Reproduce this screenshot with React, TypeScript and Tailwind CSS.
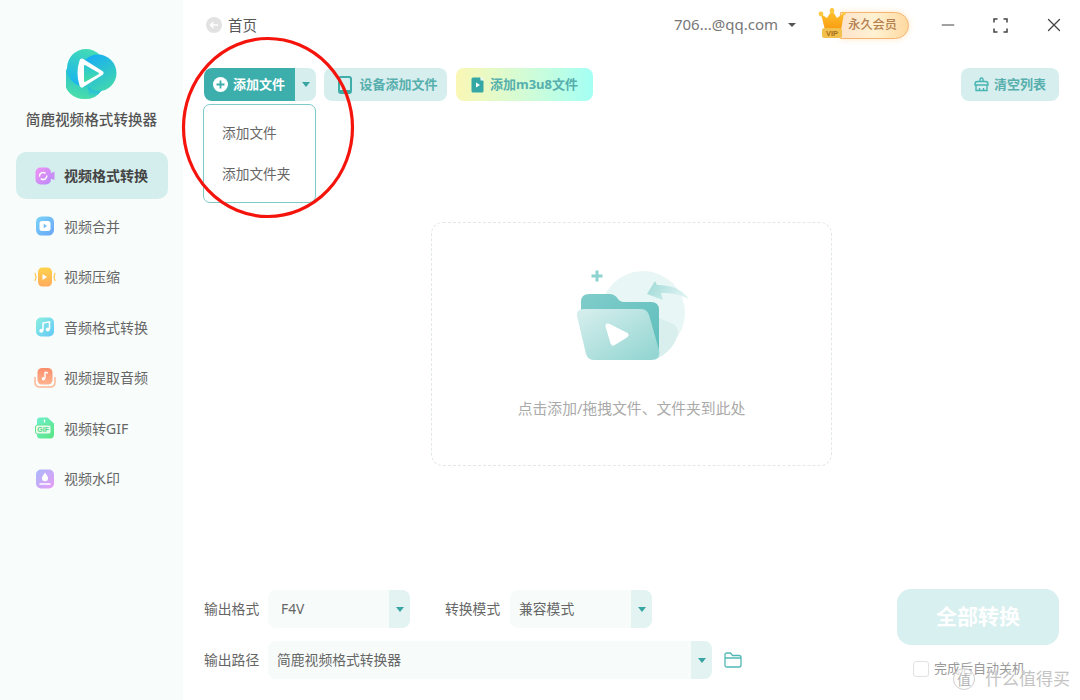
import { Minus, X } from "lucide-react";

function Logo() {
  return (
    <svg width="52" height="51" viewBox="0 0 52 51">
      <defs>
        <linearGradient id="lg1" x1="0.6" y1="0" x2="0.2" y2="1">
          <stop offset="0" stopColor="#45dcb4" />
          <stop offset="1" stopColor="#18b2f2" />
        </linearGradient>
        <linearGradient id="lg2" x1="0.2" y1="0" x2="0.8" y2="1">
          <stop offset="0" stopColor="#14aaf8" />
          <stop offset="1" stopColor="#43d9ac" />
        </linearGradient>
        <linearGradient id="lg3" x1="0.7" y1="0" x2="0.4" y2="1">
          <stop offset="0" stopColor="#16b0f2" />
          <stop offset="1" stopColor="#4bdfa6" />
        </linearGradient>
        <linearGradient id="lg4" x1="0" y1="0" x2="0" y2="1">
          <stop offset="0" stopColor="#2cc6d2" />
          <stop offset="1" stopColor="#44dca8" />
        </linearGradient>
      </defs>
      <circle cx="18" cy="30" r="20" fill="url(#lg3)" />
      <circle cx="20" cy="19" r="19" fill="url(#lg1)" />
      <circle cx="32" cy="24" r="18.5" fill="url(#lg2)" />
      <path d="M22 38 Q30 44 36 41 Q30 50 20 50 Q24 46 22 38Z" fill="url(#lg3)" />
      <path d="M16 12 L35 24 L16 36 Q12 24 16 12Z" fill="#fff" stroke="#fff" strokeWidth="5" strokeLinejoin="round" />
      <path d="M19 17 L32 24.5 L19 32Z" fill="url(#lg4)" stroke="url(#lg4)" strokeWidth="2" strokeLinejoin="round" />
    </svg>
  );
}

function NavIcon({ kind }: { kind: string }) {
  if (kind === "convert")
    return (
      <svg width="20" height="18" viewBox="0 0 20 18">
        <defs>
          <linearGradient id="ni1" x1="0" y1="0" x2="1" y2="1">
            <stop offset="0" stopColor="#f291f4" />
            <stop offset="1" stopColor="#b98af8" />
          </linearGradient>
        </defs>
        <rect x="0.5" y="0.5" width="15.5" height="17" rx="5" fill="url(#ni1)" />
        <path d="M15.5 6.5 L19.5 4.5 V13 L15.5 11.5Z" fill="#c78ef5" />
        <path d="M4.5 9 a3.6 3.6 0 0 1 5.5 -3 M11.8 9 a3.6 3.6 0 0 1 -5.5 3" stroke="#fff" strokeWidth="1.5" fill="none" strokeLinecap="round" />
      </svg>
    );
  if (kind === "merge")
    return (
      <svg width="20" height="20" viewBox="0 0 20 20">
        <defs>
          <linearGradient id="ni2" x1="0" y1="0" x2="1" y2="1">
            <stop offset="0" stopColor="#78d4f7" />
            <stop offset="1" stopColor="#6ba4f8" />
          </linearGradient>
        </defs>
        <rect x="1" y="0.5" width="18" height="19" rx="5.5" fill="url(#ni2)" />
        <rect x="4.5" y="5" width="11" height="10" rx="2.5" fill="#fff" />
        <path d="M8.7 7.8 L12 10 L8.7 12.2Z" fill="#6ebbf7" />
      </svg>
    );
  if (kind === "compress")
    return (
      <svg width="22" height="20" viewBox="0 0 22 20">
        <defs>
          <linearGradient id="ni3" x1="0" y1="0" x2="0" y2="1">
            <stop offset="0" stopColor="#ffd24a" />
            <stop offset="1" stopColor="#ffab5e" />
          </linearGradient>
        </defs>
        <rect x="4" y="0.5" width="14" height="19" rx="4.5" fill="url(#ni3)" />
        <path d="M8.5 7 L13 10 L8.5 13Z" fill="#fff" />
        <path d="M0.8 6 Q3 10 0.8 14" stroke="#ffc95c" strokeWidth="1.3" fill="none" />
        <path d="M21.2 6 Q19 10 21.2 14" stroke="#ffc95c" strokeWidth="1.3" fill="none" />
      </svg>
    );
  if (kind === "audio")
    return (
      <svg width="20" height="20" viewBox="0 0 20 20">
        <defs>
          <linearGradient id="ni4" x1="0" y1="0" x2="1" y2="1">
            <stop offset="0" stopColor="#8df0e0" />
            <stop offset="1" stopColor="#62c8f6" />
          </linearGradient>
        </defs>
        <rect x="1" y="0.5" width="18" height="19" rx="5" fill="url(#ni4)" />
        <path d="M8 13.5 V6 L14.5 4.8 V12" stroke="#fff" strokeWidth="1.5" fill="none" />
        <circle cx="6.3" cy="13.8" r="2" fill="#fff" />
        <circle cx="12.8" cy="12.5" r="2" fill="#fff" />
      </svg>
    );
  if (kind === "extract")
    return (
      <svg width="22" height="20" viewBox="0 0 22 20">
        <defs>
          <linearGradient id="ni5" x1="0" y1="0" x2="0" y2="1">
            <stop offset="0" stopColor="#fb8f6e" />
            <stop offset="1" stopColor="#ffb38f" />
          </linearGradient>
        </defs>
        <path d="M1 9 V14 Q1 19 6 19 H16 Q21 19 21 14 V9" stroke="#ffb797" strokeWidth="1.5" fill="none" />
        <rect x="3.5" y="0" width="15" height="16.5" rx="4.5" fill="url(#ni5)" />
        <path d="M11 4 V10.5" stroke="#fff" strokeWidth="1.4" />
        <path d="M11 4 L14 5.2" stroke="#fff" strokeWidth="1.4" />
        <circle cx="9.5" cy="10.8" r="1.7" fill="#fff" />
      </svg>
    );
  if (kind === "gif")
    return (
      <svg width="20" height="22" viewBox="0 0 20 22">
        <defs>
          <linearGradient id="ni6" x1="0" y1="0" x2="1" y2="1">
            <stop offset="0" stopColor="#6ef0cf" />
            <stop offset="1" stopColor="#58e57f" />
          </linearGradient>
        </defs>
        <path d="M5 0.5 H12.5 L19 6.5 V17 Q19 21.5 15 21.5 H5 Q2 21.5 2 18 V3.5 Q2 0.5 5 0.5Z" fill="url(#ni6)" />
        <rect x="0.5" y="8" width="15.5" height="9" rx="2" fill="#e9fbe9" stroke="#64e39a" />
        <text x="8.2" y="15.2" textAnchor="middle" fontSize="7" fontWeight="700" fill="#52d68c" fontFamily="Liberation Sans, sans-serif">
          GIF
        </text>
        <path d="M9.5 2.5 V5.5" stroke="#fff" strokeWidth="1.3" />
      </svg>
    );
  return (
    <svg width="20" height="20" viewBox="0 0 20 20">
      <defs>
        <linearGradient id="ni7" x1="0" y1="0" x2="1" y2="1">
          <stop offset="0" stopColor="#a9b9fb" />
          <stop offset="1" stopColor="#e79bf5" />
        </linearGradient>
      </defs>
      <rect x="1" y="0.5" width="18" height="19" rx="5" fill="url(#ni7)" />
      <path d="M10 3.5 C11.5 6 13 7.2 13 9.3 A3 3 0 0 1 7 9.3 C7 7.2 8.5 6 10 3.5Z" fill="#fff" />
      <path d="M5 15 H15" stroke="#fff" strokeWidth="1.5" strokeLinecap="round" />
    </svg>
  );
}

const navItems = [
  { kind: "convert", label: "视频格式转换", active: true },
  { kind: "merge", label: "视频合并" },
  { kind: "compress", label: "视频压缩" },
  { kind: "audio", label: "音频格式转换" },
  { kind: "extract", label: "视频提取音频" },
  { kind: "gif", label: "视频转GIF" },
  { kind: "watermark", label: "视频水印" },
];

function Sidebar() {
  return (
    <aside className="w-[183px] shrink-0 bg-[#f8fdfc] flex flex-col">
      <div className="flex justify-start pt-[49px] pl-[66px]">
        <Logo />
      </div>
      <div className="mt-[7px] text-center text-[14.6px] leading-[24px] font-medium text-[#555]">简鹿视频格式转换器</div>
      <nav className="mt-[21px] ml-[16px] w-[152px] flex flex-col gap-[3.5px]">
        {navItems.map((item) => (
          <div
            key={item.label}
            className={
              item.active
                ? "h-[47px] rounded-[10px] bg-[#d3eeec] flex items-center text-[14px] font-bold text-[#444]"
                : "h-[47px] rounded-[10px] flex items-center text-[14px] text-[#666]"
            }
          >
            <span className="w-[48px] flex justify-center pl-[10px]">
              <NavIcon kind={item.kind} />
            </span>
            {item.label}
          </div>
        ))}
      </nav>
    </aside>
  );
}

function Header() {
  return (
    <header className="h-[50px] flex items-center text-[#555]">
      <span className="w-[16px] h-[16px] ml-[2px] rounded-full bg-[#e2e2e2] flex items-center justify-center">
        <svg width="10" height="10" viewBox="0 0 10 10">
          <path d="M9 5 H1.5 M4.5 2 L1.5 5 L4.5 8" stroke="#fff" strokeWidth="1.4" fill="none" />
        </svg>
      </span>
      <span className="ml-[6px] mt-[2px] text-[14.5px]">首页</span>
      <div className="ml-auto flex items-center">
        <span className="mb-[1px] text-[15px] text-[#777]">706...@qq.com</span>
        <span className="ml-[10px] w-0 h-0 border-x-[4px] border-x-transparent border-t-[4px] border-t-[#555]" />
        <Vip />
        <span className="ml-[28px] w-[20px] flex justify-center text-[#444]">
          <Minus size={24} strokeWidth={1.4} />
        </span>
        <svg className="ml-[35px]" width="15" height="15" viewBox="0 0 15 15">
          <path d="M1 4.5 V1 H4.5 M10.5 1 H14 V4.5 M14 10.5 V14 H10.5 M4.5 14 H1 V10.5" stroke="#444" strokeWidth="1.5" fill="none" />
        </svg>
        <span className="ml-[35px] mr-[15px] text-[#444]">
          <X size={22} strokeWidth={1.4} />
        </span>
      </div>
    </header>
  );
}

function Vip() {
  return (
    <div className="ml-[22px] relative w-[92px] h-[34px] flex items-center">
      <div className="ml-[22px] w-[69px] h-[27px] rounded-r-full bg-gradient-to-r from-[#fde3cc] via-[#fff2d2] to-[#ffd9a0] border border-[#f6b46e] shadow-[0_0_6px_#ffe6c4] flex items-center justify-end pr-[11px] text-[12.2px] font-medium text-[#b5804f]">
        永久会员
      </div>
      <svg className="absolute left-0 top-0" width="28" height="32" viewBox="0 0 28 32">
        <defs>
          <linearGradient id="cr" x1="0" y1="0" x2="0" y2="1">
            <stop offset="0" stopColor="#ffc531" />
            <stop offset="1" stopColor="#f99a0e" />
          </linearGradient>
        </defs>
        <path d="M3 6 L9 10 L14 2 L19 10 L26 5 L23 22 H7Z" fill="url(#cr)" />
        <circle cx="3" cy="6" r="2.4" fill="#ffc842" />
        <circle cx="14" cy="2.4" r="2.4" fill="#ffc842" />
        <circle cx="26" cy="5.5" r="1.8" fill="#ffc842" />
        <rect x="4" y="20" width="20" height="10" rx="2.5" fill="#f2c04c" />
        <text x="14" y="28" textAnchor="middle" fontSize="7.5" fontWeight="700" fill="#a56d1b" fontFamily="Liberation Sans, sans-serif">
          VIP
        </text>
      </svg>
    </div>
  );
}

function Toolbar() {
  return (
    <div className="mt-[18px] flex items-center h-[33px] relative">
      <div className="w-[112px] h-[33px] flex rounded-[8px] overflow-hidden">
        <div className="w-[91px] bg-[#3cafac] flex items-center pl-[9px] gap-[5px] text-[13px] font-bold text-white">
          <span className="w-[15px] h-[15px] rounded-full bg-white flex items-center justify-center">
            <svg width="9" height="9" viewBox="0 0 9 9">
              <path d="M4.5 0.5 V8.5 M0.5 4.5 H8.5" stroke="#3cafac" strokeWidth="1.8" />
            </svg>
          </span>
          添加文件
        </div>
        <div className="flex-1 bg-[#d6eeee] flex items-center justify-center">
          <Caret />
        </div>
      </div>
      <button className="ml-[8px] w-[123px] h-[33px] rounded-[8px] bg-[#d6eeee] flex items-center justify-center gap-[7px] pl-[5px] text-[13px] font-bold text-[#56afad]">
        <svg width="14" height="18" viewBox="0 0 14 18">
          <rect x="1" y="1" width="12" height="16" rx="2" fill="none" stroke="#3fadaa" strokeWidth="2" />
          <rect x="1" y="14" width="12" height="3" fill="#3fadaa" />
        </svg>
        设备添加文件
      </button>
      <button className="ml-[9px] w-[137px] h-[33px] rounded-[8px] bg-gradient-to-r from-[#faf7b4] to-[#a3fff4] flex items-center justify-center gap-[6px] text-[13px] font-bold text-[#56afad]">
        <svg width="13" height="16" viewBox="0 0 13 16">
          <path d="M2 0.5 H9 L12.5 4 V14 Q12.5 15.5 11 15.5 H2 Q0.5 15.5 0.5 14 V2 Q0.5 0.5 2 0.5Z" fill="#35a8a6" />
          <path d="M5 5.5 L9 8 L5 10.5Z" fill="#fff" />
          <path d="M9.5 0.5 H12.5 V3.5 H9.5Z" fill="#eafaf0" />
        </svg>
        添加m3u8文件
      </button>
      <button className="ml-auto mr-[21px] w-[98px] h-[33px] rounded-[8px] bg-[#d6eeee] flex items-center justify-center gap-[5px] text-[13px] font-bold text-[#56afad]">
        <svg width="15" height="15" viewBox="0 0 15 15">
          <path d="M6 4.5 V2.5 Q6 1 7.5 1 Q9 1 9 2.5 V4.5 M1 7 Q1 4.5 3.5 4.5 H11.5 Q14 4.5 14 7 V8 H1Z M2 8 V13.5 H13 V8 M5.5 11 V13.5 M9.5 11 V13.5" stroke="#47b5b2" strokeWidth="1.4" fill="none" />
        </svg>
        清空列表
      </button>
      <div className="absolute -left-[1px] top-[36px] z-10 w-[113px] h-[99px] bg-white border border-[#7ccaca] rounded-[7px] flex flex-col pl-[18px] pt-[8px] text-[13.7px] text-[#666]">
        <div className="h-[41px] flex items-center">添加文件</div>
        <div className="h-[41px] flex items-center">添加文件夹</div>
      </div>
    </div>
  );
}

function Caret() {
  return <span className="w-0 h-0 border-x-[4px] border-x-transparent border-t-[5px] border-t-[#38a5a3]" />;
}

function FolderArt() {
  return (
    <svg width="120" height="100" viewBox="0 0 120 100">
      <defs>
        <linearGradient id="fa1" x1="0" y1="0" x2="1" y2="1">
          <stop offset="0" stopColor="#d8efee" />
          <stop offset="1" stopColor="#8fd4d0" />
        </linearGradient>
        <linearGradient id="fa2" x1="0" y1="0" x2="1" y2="1">
          <stop offset="0" stopColor="#80cdcb" />
          <stop offset="1" stopColor="#5dbdbb" />
        </linearGradient>
        <linearGradient id="fa3" x1="0" y1="0" x2="1" y2="0.3">
          <stop offset="0" stopColor="#9cd9d6" />
          <stop offset="1" stopColor="#dcf2f1" />
        </linearGradient>
      </defs>
      <circle cx="68" cy="48" r="42" fill="#e8f6f5" />
      <path d="M84 53 L98 59 Q103 62 103 68 Q100 84 82 94Z" fill="#d8efee" />
      <path d="M6 37 Q6 29 14 29 H34 Q40 29 43 34 Q45 37 49 37 H76 Q84 37 84 45 V88 L40 70 L6 50Z" fill="url(#fa2)" />
      <path d="M2 51 Q1 44 9 44 H66 Q72 44 74 50 L84 85 Q86 95 76 95 H19 Q13 95 11 89Z" fill="url(#fa1)" />
      <path d="M33 61 L51 70 L38 78Z" fill="#fff" stroke="#fff" strokeWidth="5" strokeLinejoin="round" />
      <path d="M22 5.5 V16.5 M16.5 11 H27.5" stroke="#8dd3d0" strokeWidth="3" />
      <path d="M72 29 L80 16 L82 20 Q104 20 114 34 Q100 27 86 28 L88 35Z" fill="url(#fa3)" />
    </svg>
  );
}

function DropZone() {
  return (
    <div className="mt-[121px] ml-[227px] w-[401px] h-[244px] border border-dashed border-[#e2e8e7] rounded-[12px] flex flex-col items-center">
      <div className="mt-[42px] ml-[7px]">
        <FolderArt />
      </div>
      <div className="mt-[31px] text-[14.8px] leading-[24px] text-[#aaa]">点击添加/拖拽文件、文件夹到此处</div>
    </div>
  );
}

function Select({ value, className, pad }: { value: string; className: string; pad: string }) {
  return (
    <div className={"h-[38px] rounded-[8px] bg-[#f7fcfb] flex overflow-hidden text-[13.8px] text-[#666] " + className}>
      <div className={"flex-1 flex items-center " + pad}>{value}</div>
      <div className="w-[21px] bg-[#e2f3f2] flex items-center justify-center">
        <Caret />
      </div>
    </div>
  );
}

function Footer() {
  return (
    <div className="mt-auto mb-[21px] flex items-start">
      <div className="flex flex-col gap-[13px]">
        <div className="flex items-center">
          <span className="w-[64px] text-[13.8px] text-[#666]">输出格式</span>
          <Select value="F4V" className="w-[142px]" pad="pl-[13px]" />
          <span className="ml-[35px] w-[65px] text-[13.8px] text-[#666]">转换模式</span>
          <Select value="兼容模式" className="w-[142px]" pad="pl-[9px]" />
        </div>
        <div className="flex items-center">
          <span className="w-[64px] text-[13.8px] text-[#666]">输出路径</span>
          <Select value="简鹿视频格式转换器" className="w-[444px]" pad="pl-[9px]" />
          <svg className="ml-[12px]" width="18" height="16" viewBox="0 0 18 16">
            <path d="M1 13 V3 Q1 1 3 1 H6.5 L8.5 3.5 H15 Q17 3.5 17 5.5 V13 Q17 15 15 15 H3 Q1 15 1 13Z M1 6 H17" stroke="#50b9b6" strokeWidth="1.3" fill="none" />
          </svg>
        </div>
      </div>
      <div className="ml-auto mr-[21px] -mt-[1px] w-[162px] flex flex-col">
        <button className="h-[56px] rounded-[14px] bg-[#d8f0ef] text-[21px] font-bold text-white">全部转换</button>
        <div className="mt-[14px] ml-[16px] flex items-center gap-[5px] text-[13px] leading-[18px] text-[#999]">
          <span className="w-[16px] h-[16px] rounded-[3px] border border-[#e2e2e2] bg-white" />
          <span className="mb-[2px]">完成后自动关机</span>
        </div>
      </div>
    </div>
  );
}

export default function App() {
  return (
    <div className="relative w-[1080px] h-[700px] overflow-hidden bg-white flex font-['Noto_Sans','Noto_Sans_CJK_SC',sans-serif]">
      <Sidebar />
      <main className="flex-1 min-w-0 flex flex-col pl-[21px]">
        <Header />
        <Toolbar />
        <DropZone />
        <Footer />
      </main>
      {/* red annotation circle drawn over the screenshot */}
      <svg className="absolute left-[180px] top-[35px] z-20 pointer-events-none" width="180" height="190" viewBox="0 0 180 190">
        <ellipse cx="88" cy="92.5" rx="84.5" ry="89" fill="none" stroke="#f5140c" strokeWidth="3.2" />
      </svg>
      {/* site watermark */}
      <div className="absolute right-[10px] bottom-[10px] z-20 flex items-center gap-[10px] text-[#c4c4c4] pointer-events-none">
        <span className="w-[22px] h-[22px] rounded-full border border-[#cfcfcf] bg-white/60 flex items-center justify-center text-[14px] text-[#b5b5b5]">值</span>
        <span className="text-[17px] leading-[22px] [text-shadow:0_0_2px_#fff]">什么值得买</span>
      </div>
    </div>
  );
}
